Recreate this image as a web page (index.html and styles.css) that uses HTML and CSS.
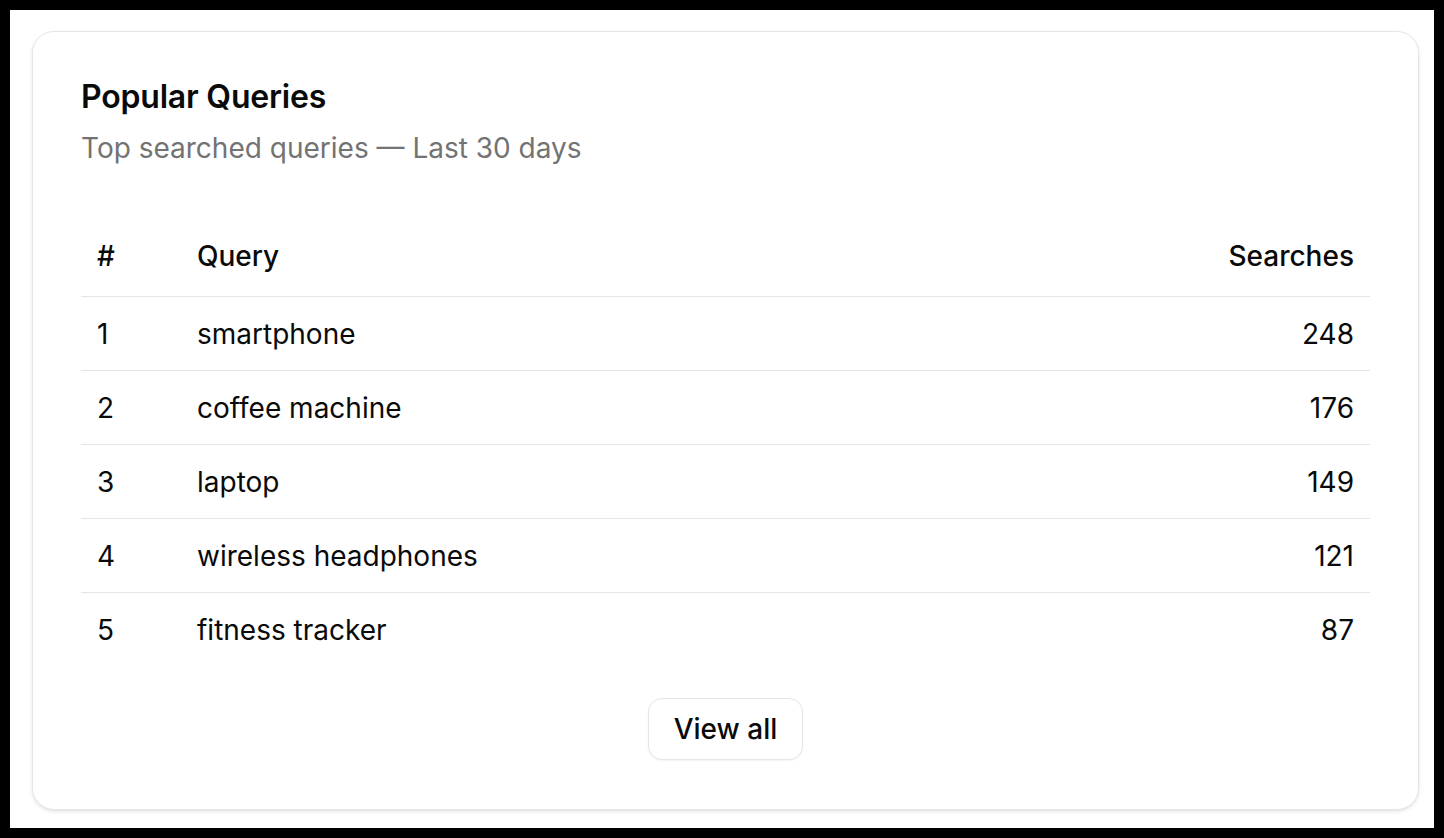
FILE: index.html
```html
<!DOCTYPE html>
<html lang="en">
<head>
<meta charset="utf-8">
<title>Popular Queries</title>
<link rel="stylesheet" href="styles.css">
</head>
<body>
<main class="frame">
  <section class="card">
    <header class="card-header">
      <h2 class="card-title">Popular Queries</h2>
      <p class="card-desc">Top searched queries — Last 30 days</p>
    </header>
    <table class="queries">
      <thead>
        <tr><th class="col-rank">#</th><th class="col-query">Query</th><th class="col-count">Searches</th></tr>
      </thead>
      <tbody>
        <tr><td class="col-rank">1</td><td class="col-query">smartphone</td><td class="col-count">248</td></tr>
        <tr><td class="col-rank">2</td><td class="col-query">coffee machine</td><td class="col-count">176</td></tr>
        <tr><td class="col-rank">3</td><td class="col-query">laptop</td><td class="col-count">149</td></tr>
        <tr><td class="col-rank">4</td><td class="col-query">wireless headphones</td><td class="col-count">121</td></tr>
        <tr><td class="col-rank">5</td><td class="col-query">fitness tracker</td><td class="col-count">87</td></tr>
      </tbody>
    </table>
    <div class="card-footer">
      <button class="btn" type="button">View all</button>
    </div>
  </section>
</main>
</body>
</html>
```
FILE: styles.css
```css
html {
  background: #000;
}
body {
  margin: 10px;
  background: #fff;
  height: 818px;
  font-family: Inter, "Noto Sans", sans-serif;
  color: #0a0a0a;
}
.frame {
  padding: 21px 15px 0 22px;
}
.card {
  box-sizing: border-box;
  height: 779px;
  border: 1px solid #e5e5e5;
  border-radius: 22px;
  box-shadow: 0 2px 4px rgba(0,0,0,0.08), 0 1px 2px rgba(0,0,0,0.05);
  padding: 48px 48px 0 48px;
  display: flex;
  flex-direction: column;
}
.card-header {
  display: flex;
  flex-direction: column;
  gap: 16px;
}
.card-title {
  margin: 0;
  font-size: 32px;
  line-height: 34px;
  font-weight: 600;
  letter-spacing: -0.2px;
}
.card-desc {
  margin: 0;
  font-size: 28px;
  line-height: 36px;
  color: #737373;
}
.queries {
  margin-top: 56px;
  width: 100%;
  border-collapse: collapse;
  font-size: 28px;
}
.queries th {
  font-weight: 500;
  height: 68px;
  padding: 0 16px 6px;
  text-align: left;
}
.queries td {
  height: 73px;
  padding: 0 16px;
  border-top: 1px solid #e5e5e5;
}
.queries thead tr {
  border-bottom: 1px solid #e5e5e5;
}
.col-rank {
  width: 68px;
}
.queries .col-count {
  text-align: right;
}
.card-footer {
  display: flex;
  justify-content: center;
  margin-top: 32px;
}
.btn {
  font-family: inherit;
  font-size: 28px;
  font-weight: 500;
  color: #0a0a0a;
  background: #fff;
  border: 1px solid #e5e5e5;
  border-radius: 14px;
  height: 62px;
  padding: 0 25px;
  box-shadow: 0 1px 2px rgba(0,0,0,0.05);
}
```
